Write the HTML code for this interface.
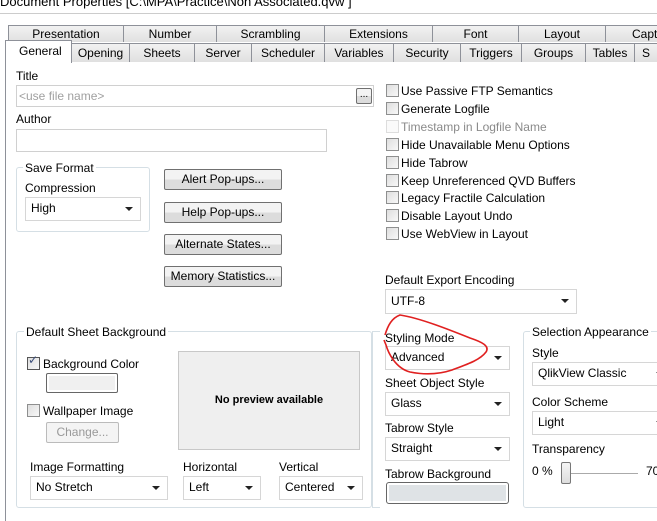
<!DOCTYPE html><html><head><style>
body{margin:0;width:657px;height:521px;overflow:hidden;background:#fff;font-family:"Liberation Sans",sans-serif;font-size:12px;color:#000;position:relative}
.a{position:absolute;white-space:nowrap}
.tab{position:absolute;height:17px;border:1px solid #8e9199;border-bottom:none;background:linear-gradient(#f2f2f2,#e0e0e0);text-align:center;line-height:17px;box-sizing:border-box;white-space:nowrap;overflow:hidden}
.in{position:absolute;border:1px solid #d0d0d0;background:#fff;box-sizing:border-box}
.sel{position:absolute;border:1px solid #d6d6d6;background:#fff;box-sizing:border-box;padding-left:5px;line-height:20px}
.sel:after{content:"";position:absolute;right:7px;top:9px;border:4px solid transparent;border-top:4px solid #222;border-bottom:none}
.btn{position:absolute;border:1px solid #707070;border-radius:2px;background:linear-gradient(#f3f3f3 50%,#dcdcdc 50%);text-align:center;line-height:18px;box-sizing:border-box}
.cb{position:absolute;width:13px;height:13px;border:1px solid #8e8f8f;background:linear-gradient(135deg,#dedede,#f8f8f8);box-sizing:border-box}
.grp{position:absolute;border:1px solid #d5dfe5;border-radius:3px;box-sizing:border-box}
.lg{position:absolute;background:#fff;padding:0 2px;top:-7px}
.r1{top:25px}
.r2{top:43px;height:19px;line-height:19px}
</style></head><body>
<div class="a" style="left:0;top:-6px;font-size:13px">Document Properties [C:\MPA\Practice\Non Associated.qvw ]</div>
<div style="position:absolute;left:0;top:13px;width:657px;height:1px;background:#ccc"></div>
<div style="position:absolute;left:5px;top:61px;width:1px;height:460px;background:#8e9199"></div>
<div style="position:absolute;left:5px;top:61px;width:652px;height:1px;background:#8e9199"></div>
<div class="tab r1" style="left:8px;width:116px">Presentation</div>
<div class="tab r1" style="left:123px;width:94px">Number</div>
<div class="tab r1" style="left:216px;width:109px">Scrambling</div>
<div class="tab r1" style="left:324px;width:109px">Extensions</div>
<div class="tab r1" style="left:432px;width:87px">Font</div>
<div class="tab r1" style="left:518px;width:88px">Layout</div>
<div class="tab r1" style="left:605px;width:100px;text-align:left;padding-left:26px">Caption</div>
<div class="tab r2" style="left:71px;width:59px">Opening</div>
<div class="tab r2" style="left:129px;width:66px">Sheets</div>
<div class="tab r2" style="left:194px;width:58px">Server</div>
<div class="tab r2" style="left:251px;width:74px">Scheduler</div>
<div class="tab r2" style="left:324px;width:70px">Variables</div>
<div class="tab r2" style="left:393px;width:68px">Security</div>
<div class="tab r2" style="left:460px;width:62px">Triggers</div>
<div class="tab r2" style="left:521px;width:65px">Groups</div>
<div class="tab r2" style="left:585px;width:50px">Tables</div>
<div class="tab r2" style="left:634px;width:60px;text-align:left;padding-left:7px">S</div>
<div class="tab" style="left:5px;top:40px;width:67px;height:23px;line-height:20px;background:#fff;text-align:left;padding-left:13px">General</div>

<div class="a" style="left:16px;top:69px">Title</div>
<div class="in" style="left:16px;top:85px;width:358px;height:22px;color:#a0a0a0;padding-left:2px;line-height:20px">&lt;use file name&gt;</div>
<div class="btn" style="left:356px;top:88px;width:16px;height:16px;line-height:12px;font-size:10px">...</div>
<div class="a" style="left:16px;top:112px">Author</div>
<div class="in" style="left:16px;top:129px;width:311px;height:23px"></div>
<div class="grp" style="left:16px;top:167px;width:134px;height:65px"><div class="lg" style="left:6px">Save Format</div></div>
<div class="a" style="left:25px;top:181px">Compression</div>
<div class="sel" style="left:25px;top:197px;width:116px;height:24px">High</div>
<div class="btn" style="left:164px;top:169px;width:118px;height:21px">Alert Pop-ups...</div>
<div class="btn" style="left:164px;top:202px;width:118px;height:21px">Help Pop-ups...</div>
<div class="btn" style="left:164px;top:234px;width:118px;height:21px">Alternate States...</div>
<div class="btn" style="left:164px;top:266px;width:118px;height:21px">Memory Statistics...</div>

<div class="cb" style="left:386px;top:84px"></div><div class="a" style="left:401px;top:84px">Use Passive FTP Semantics</div>
<div class="cb" style="left:386px;top:102px"></div><div class="a" style="left:401px;top:102px">Generate Logfile</div>
<div class="cb" style="left:386px;top:120px;border-color:#ddd;background:#fafafa"></div><div class="a" style="left:401px;top:120px;color:#8a8a8a">Timestamp in Logfile Name</div>
<div class="cb" style="left:386px;top:138px"></div><div class="a" style="left:401px;top:138px">Hide Unavailable Menu Options</div>
<div class="cb" style="left:386px;top:156px"></div><div class="a" style="left:401px;top:156px">Hide Tabrow</div>
<div class="cb" style="left:386px;top:174px"></div><div class="a" style="left:401px;top:174px">Keep Unreferenced QVD Buffers</div>
<div class="cb" style="left:386px;top:191px"></div><div class="a" style="left:401px;top:191px">Legacy Fractile Calculation</div>
<div class="cb" style="left:386px;top:209px"></div><div class="a" style="left:401px;top:209px">Disable Layout Undo</div>
<div class="cb" style="left:386px;top:227px"></div><div class="a" style="left:401px;top:227px">Use WebView in Layout</div>
<div class="a" style="left:385px;top:273px">Default Export Encoding</div>
<div class="sel" style="left:385px;top:289px;width:192px;height:25px;line-height:23px">UTF-8</div>

<div class="grp" style="left:16px;top:331px;width:356px;height:177px"><div class="lg" style="left:7px">Default Sheet Background</div></div>
<div class="cb" style="left:27px;top:357px;border-color:#555"></div><div class="a" style="left:28px;top:353px;color:#3a4d7a;font-size:12px">&#10003;</div>
<div class="a" style="left:43px;top:357px">Background Color</div>
<div style="position:absolute;left:46px;top:373px;width:72px;height:20px;border:1px solid #666;border-radius:2px;box-sizing:border-box;background:#f0f0f0;box-shadow:inset 0 0 0 2px #fff"></div>
<div class="cb" style="left:27px;top:404px"></div><div class="a" style="left:43px;top:404px">Wallpaper Image</div>
<div style="position:absolute;left:46px;top:422px;width:73px;height:21px;border:1px solid #bbb;border-radius:2px;box-sizing:border-box;background:#f4f4f4;color:#999;text-align:center;line-height:19px">Change...</div>
<div style="position:absolute;left:178px;top:351px;width:182px;height:99px;border:1px solid #c8c8c8;background:#efefef;box-sizing:border-box;text-align:center;line-height:97px;font-weight:bold;font-size:11px">No preview available</div>
<div class="a" style="left:30px;top:460px">Image Formatting</div>
<div class="sel" style="left:30px;top:476px;width:138px;height:24px">No Stretch</div>
<div class="a" style="left:183px;top:460px">Horizontal</div>
<div class="sel" style="left:183px;top:476px;width:78px;height:24px">Left</div>
<div class="a" style="left:279px;top:460px">Vertical</div>
<div class="sel" style="left:279px;top:476px;width:84px;height:24px">Centered</div>

<div class="grp" style="left:372px;top:331px;width:8px;height:177px;border-left:1px solid #d5dfe5;border-right:none;border-radius:0"></div>
<div class="a" style="left:385px;top:331px">Styling Mode</div>
<div class="sel" style="left:385px;top:346px;width:125px;height:24px">Advanced</div>
<div class="a" style="left:385px;top:376px">Sheet Object Style</div>
<div class="sel" style="left:385px;top:392px;width:125px;height:24px">Glass</div>
<div class="a" style="left:385px;top:421px">Tabrow Style</div>
<div class="sel" style="left:385px;top:437px;width:125px;height:24px">Straight</div>
<div class="a" style="left:385px;top:467px">Tabrow Background</div>
<div style="position:absolute;left:386px;top:482px;width:123px;height:22px;border:1px solid #666;border-radius:3px;box-sizing:border-box;background:#dfe3e6;box-shadow:inset 0 0 0 2px #fff"></div>

<div class="grp" style="left:523px;top:331px;width:150px;height:177px"><div class="lg" style="left:6px">Selection Appearance</div></div>
<div class="a" style="left:532px;top:346px">Style</div>
<div class="sel" style="left:532px;top:362px;width:140px;height:24px">QlikView Classic</div>
<div class="a" style="left:532px;top:395px">Color Scheme</div>
<div class="sel" style="left:532px;top:411px;width:140px;height:24px">Light</div>
<div class="a" style="left:532px;top:442px">Transparency</div>
<div class="a" style="left:532px;top:464px">0 %</div>
<div style="position:absolute;left:566px;top:473px;width:72px;height:1px;background:#aaa"></div>
<div style="position:absolute;left:561px;top:462px;width:10px;height:22px;border:1px solid #777;border-radius:2px;background:linear-gradient(#f5f5f5,#ddd);box-sizing:border-box"></div>
<div class="a" style="left:646px;top:464px">70</div>

<svg style="position:absolute;left:0;top:0" width="657" height="521"><path d="M385,335 C388,325 392,318 400,315 C420,318 450,330 470,338 C482,342 490,346 486,352 C480,360 468,364 452,370 C440,374 425,375 410,372 C395,368 388,352 386,345 L384,340" fill="none" stroke="#e02020" stroke-width="1.6"/></svg>
</body></html>
